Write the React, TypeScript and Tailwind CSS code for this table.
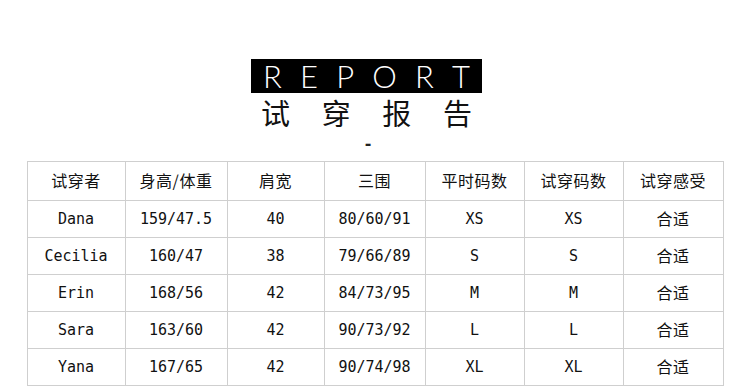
import React from "react";

interface Row {
  name: string;
  hw: string;
  shoulder: string;
  bust: string;
  usual: string;
  tried: string;
  feel: string;
}

const rows: Row[] = [
  { name: "Dana", hw: "159/47.5", shoulder: "40", bust: "80/60/91", usual: "XS", tried: "XS", feel: "合适" },
  { name: "Cecilia", hw: "160/47", shoulder: "38", bust: "79/66/89", usual: "S", tried: "S", feel: "合适" },
  { name: "Erin", hw: "168/56", shoulder: "42", bust: "84/73/95", usual: "M", tried: "M", feel: "合适" },
  { name: "Sara", hw: "163/60", shoulder: "42", bust: "90/73/92", usual: "L", tried: "L", feel: "合适" },
  { name: "Yana", hw: "167/65", shoulder: "42", bust: "90/74/98", usual: "XL", tried: "XL", feel: "合适" },
];

const headers = ["试穿者", "身高/体重", "肩宽", "三围", "平时码数", "试穿码数", "试穿感受"];
const widths = ["w-[98px]", "w-[102px]", "w-[97px]", "w-[101px]", "w-[99px]", "w-[99px]", "w-[100px]"];

const cjk = "font-['Noto_Sans_CJK_SC',sans-serif]";
const mono = "font-['DejaVu_Sans_Mono','Noto_Sans_CJK_SC',monospace]";

const App: React.FC = () => {
  return (
    <div className="w-[750px] h-[386px] bg-white overflow-hidden pt-[59px]">
      {/* Title */}
      <div className="flex flex-col items-center pr-[17px]">
        <div className="w-[231px] h-[34px] bg-black flex items-center justify-between px-[12px] text-white text-[31px] leading-none font-light font-['Lato',sans-serif]">
          {"REPORT".split("").map((c, i) => (
            <span key={i}>{c}</span>
          ))}
        </div>
        <div className={`w-[211px] mt-[5px] flex justify-between text-[29px] leading-none text-[#111] font-normal ${cjk}`}>
          {["试", "穿", "报", "告"].map((c) => (
            <span key={c}>{c}</span>
          ))}
        </div>
        <div className="mt-[9px] h-[16px] text-[16px] leading-none text-[#222] font-bold font-['DejaVu_Sans',sans-serif] pl-[3px]">-</div>
      </div>

      {/* Table */}
      <table className="mt-[9px] mx-auto w-[697px] border-collapse table-fixed text-[#111]">
        <thead>
          <tr className="h-[39px]">
            {headers.map((h, i) => (
              <th key={h} className={`${widths[i]} border border-[#cfcfcf] text-center font-normal text-[16px] leading-[18px] pb-[2px] tracking-[0.5px] ${cjk}`}>
                {h}
              </th>
            ))}
          </tr>
        </thead>
        <tbody>
          {rows.map((r) => (
            <tr key={r.name} className="h-[37px]">
              {[r.name, r.hw, r.shoulder, r.bust, r.usual, r.tried].map((v, i) => (
                <td key={i} className={`border border-[#cfcfcf] text-center text-[15px] ${mono}`}>
                  {v}
                </td>
              ))}
              <td className={`border border-[#cfcfcf] text-center text-[16px] leading-[18px] pb-[3px] tracking-[0.5px] ${cjk}`}>{r.feel}</td>
            </tr>
          ))}
        </tbody>
      </table>
    </div>
  );
};

export default App;
